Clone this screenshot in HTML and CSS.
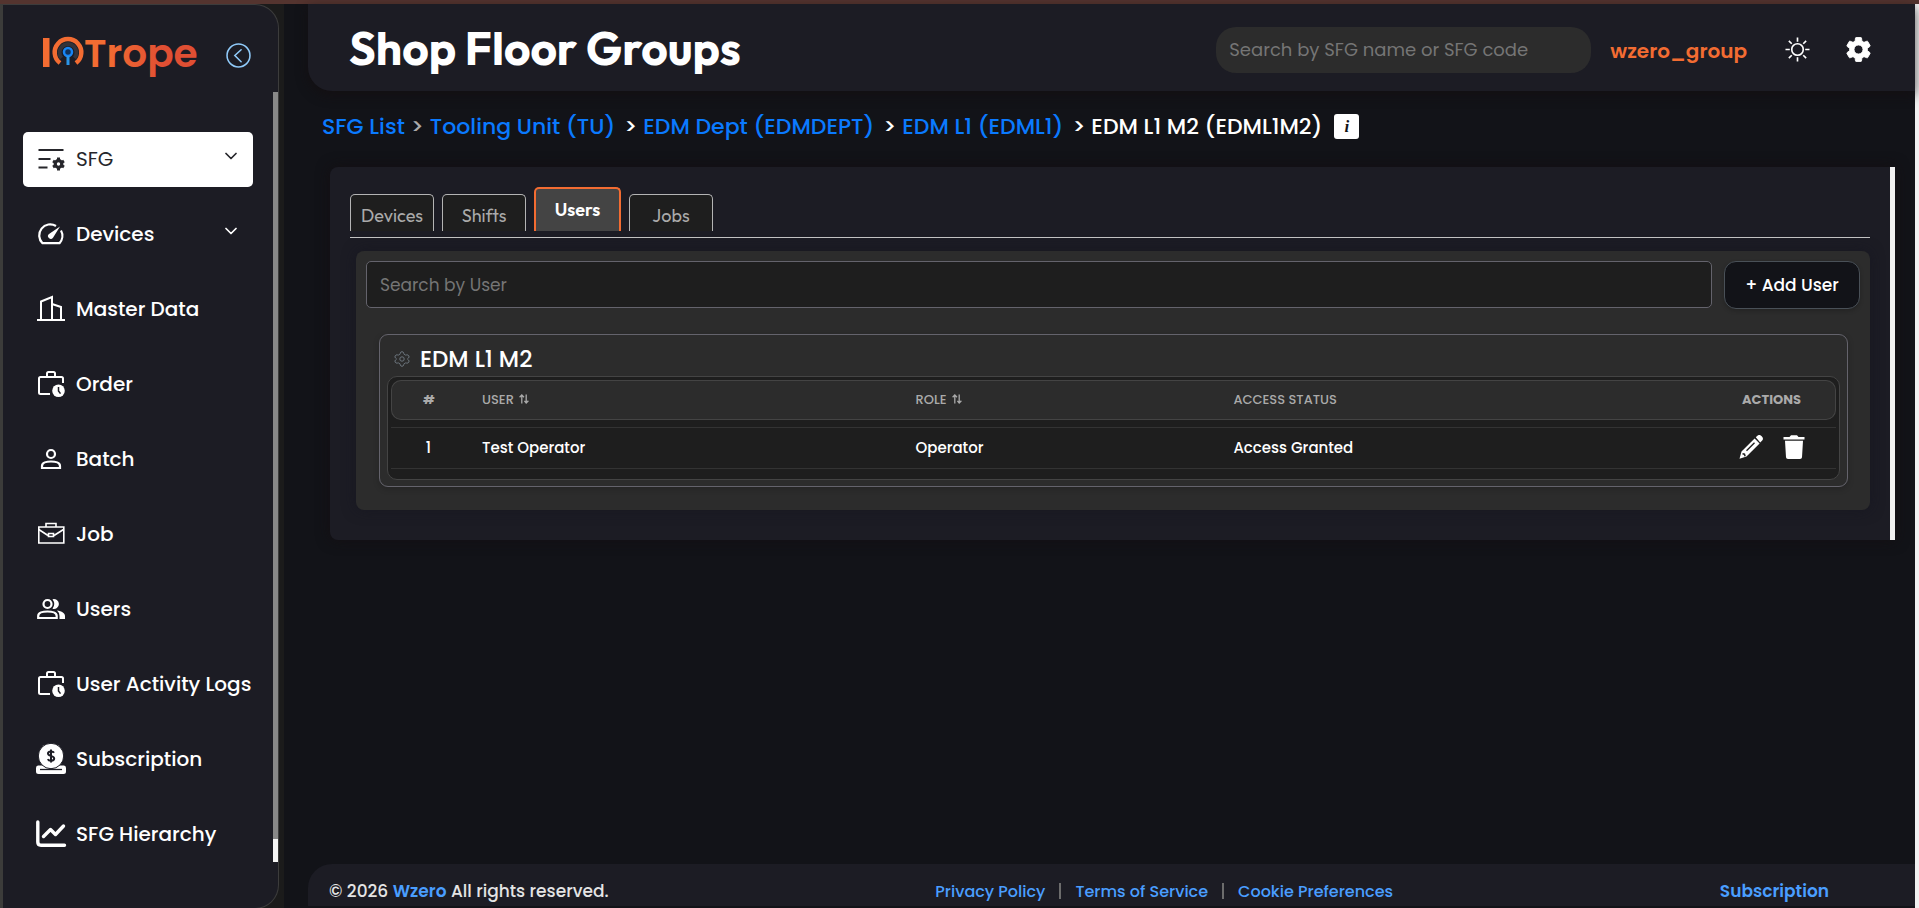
FILE: index.html
```html
<!DOCTYPE html>
<html lang="en">
<head>
<meta charset="utf-8">
<title>IOTrope – Shop Floor Groups</title>
<link rel="stylesheet" href="styles.css">
</head>
<body>
<svg class="sprite" aria-hidden="true">
  <symbol id="i-chevron" viewBox="0 0 12 12"><path d="M1 3.500l5 5 5-5" fill="none" stroke="currentColor" stroke-width="1.700" stroke-linecap="round" stroke-linejoin="round"/></symbol>
  <symbol id="i-case" viewBox="0 0 28 28"><g fill="none" stroke="currentColor" stroke-width="2" stroke-linejoin="round"><path d="M12 24H2.500Q1 24 1 22.500V8.500Q1 7 2.500 7h21Q25 7 25 8.500V13"/><path d="M9 7V3.500Q9 2 10.500 2h5Q17 2 17 3.500V7"/></g><circle cx="20.500" cy="20.800" r="6.300" fill="currentColor"/><path d="M20.500 17v4l2 2.600" fill="none" stroke="#1c1c24" stroke-width="1.500"/></symbol>
  <symbol id="i-sort" viewBox="0 0 10 10"><path d="M2.800 9.500V1M.6 3.200L2.800 1 5 3.200M7.200.5V9M5.400 6.800L7.200 9 9.400 6.800" fill="none" stroke="currentColor" stroke-width="1.300"/></symbol>
</svg>
<div class="frame">
  <aside class="sidebar">
    <div class="brand">
      <svg class="logo" viewBox="0 0 156 44" role="img" aria-label="IOTrope">
        <defs><linearGradient id="flame" x1="0" y1="0" x2="1" y2="0"><stop offset="0.200" stop-color="#f36c32"/><stop offset="0.700" stop-color="#e04f33"/></linearGradient></defs>
        <path d="M0 5h6.500v29H0z" fill="#f36c32"/>
        <path d="M17 30a13.300 13.300 0 1 1 16 0" fill="none" stroke="#f36c32" stroke-width="4.500"/>
        <path d="M18.500 25a8.500 8.500 0 1 1 13 0" fill="none" stroke="#33333a" stroke-width="4"/>
        <circle cx="25" cy="19" r="4" fill="#10325c" stroke="#1785f5" stroke-width="2.500"/>
        <path d="M25 23v9" stroke="#2a95e8" stroke-width="3"/>
        <text class="logo-text" x="41" y="34" fill="url(#flame)">Trope</text>
      </svg>
      <button class="icon-btn collapse" type="button" aria-label="Collapse menu">
        <svg viewBox="0 0 24 24"><g fill="none" stroke="currentColor" stroke-width="1.500"><circle cx="12" cy="12" r="11"/><path d="M14.500 6.500L8.500 12l6 6" stroke-linecap="round"/></g></svg>
      </button>
    </div>
    <div class="side-body">
      <nav class="menu">
        <a class="item active" href="#"><svg class="ico" viewBox="0 0 28 28"><path d="M.5 5h25M.5 14h12M.5 22.500h9" fill="none" stroke="currentColor" stroke-width="2.200"/><circle cx="20.500" cy="19" r="3.300" fill="none" stroke="currentColor" stroke-width="3.200"/><path d="M20.500 12.500v3M20.500 22.500v3M15 16l2.500 1.500M23.500 20.500L26 22M15 22l2.500-1.500M23.500 17.500L26 16" stroke="currentColor" stroke-width="3"/></svg><span>SFG</span><svg class="chev"><use href="#i-chevron"/></svg></a>
        <a class="item" href="#"><svg class="ico" viewBox="0 0 28 28"><g fill="none" stroke="currentColor" stroke-width="2.200"><path d="M18 6A11 11 0 0 0 4.500 23.200h17A11 11 0 0 0 23 10.500"/></g><path d="M22 6.500l-7 11.300a2.800 2.800 0 1 1-4-3.900z" fill="currentColor"/></svg><span>Devices</span><svg class="chev"><use href="#i-chevron"/></svg></a>
        <a class="item" href="#"><svg class="ico" viewBox="0 0 28 28"><path d="M-1 25h28M3 24.500V6.500L14 2v22.500M14 9l9 3v12.500" fill="none" stroke="currentColor" stroke-width="2"/></svg><span>Master Data</span></a>
        <a class="item" href="#"><svg class="ico"><use href="#i-case"/></svg><span>Order</span></a>
        <a class="item" href="#"><svg class="ico" viewBox="0 0 28 28"><circle cx="13" cy="9" r="4" fill="none" stroke="currentColor" stroke-width="2.200"/><path d="M4 23v-2c0-6 18-6 18 0v2z" fill="none" stroke="currentColor" stroke-width="2.200"/></svg><span>Batch</span></a>
        <a class="item" href="#"><svg class="ico" viewBox="0 0 28 28"><g fill="none" stroke="currentColor" stroke-width="1.600"><path d="M.8 7h25v16H.8zM8 7V3.500h10V7"/><path d="M.8 9.500L10 15.500M25.500 9.500L16 15.500"/><path d="M10.500 13.500h5v3h-5z"/></g></svg><span>Job</span></a>
        <a class="item" href="#"><svg class="ico" viewBox="0 0 28 28"><circle cx="9.500" cy="9" r="4" fill="none" stroke="currentColor" stroke-width="2.200"/><path d="M.2 23v-2c0-6 18.500-6 18.500 0v2z" fill="none" stroke="currentColor" stroke-width="2.200"/><path d="M14.500 4.200a5 5 0 1 1 0 9.600q3.500-4.800 0-9.600zM19 15.500c5 .7 8 2.500 8 5.500v3h-5.500v-3q0-3.500-2.500-5.500z" fill="currentColor"/></svg><span>Users</span></a>
        <a class="item" href="#"><svg class="ico"><use href="#i-case"/></svg><span>User Activity Logs</span></a>
        <a class="item" href="#"><svg class="ico wide" viewBox="0 0 30 30"><path d="M2 21.500h5q8 6.500 16 0h5q2 0 2 2.500v3.500q0 2.500-2.500 2.500h-25Q0 30 0 27.500V24q0-2.500 2-2.500z" fill="currentColor"/><path d="M4 25.500h22" stroke="#1c1c24" stroke-width="1.300"/><circle cx="15" cy="12" r="12.700" fill="currentColor" stroke="#1c1c24" stroke-width="1"/><path d="M18 8.700c-1-1.800-6-1.800-6 .8 0 3 6.200 1.800 6.200 5 0 2.800-5.400 2.800-6.400.6M15 5.500v13" fill="none" stroke="#1c1c24" stroke-width="2"/></svg><span>Subscription</span></a>
        <a class="item" href="#"><svg class="ico wide" viewBox="0 0 30 30"><path d="M1.800 3v20q0 3.200 3.200 3.200h23.500M7.500 17.500l7-7 5 5 8-8.500" fill="none" stroke="currentColor" stroke-width="3.400" stroke-linecap="round" stroke-linejoin="round"/></svg><span>SFG Hierarchy</span></a>
      </nav>
      <div class="track"><div class="thumb"></div></div>
    </div>
  </aside>

  <div class="page">
    <header class="topbar">
      <h1>Shop Floor Groups</h1>
      <input class="top-search" type="search" aria-label="Search SFG" placeholder="Search by SFG name or SFG code">
      <span class="account">wzero_group</span>
      <button class="icon-btn" type="button" aria-label="Toggle theme">
        <svg viewBox="0 0 26 26"><g fill="none" stroke="currentColor" stroke-width="1.700"><circle cx="13" cy="13" r="6"/><path d="M13 .5v4.500M13 21v4.500M.5 13H5M21 13h4.500M4 4l3 3M19 19l3 3M4 22l3-3M19 7l3-3"/></g></svg>
      </button>
      <button class="icon-btn" type="button" aria-label="Settings">
        <svg viewBox="2 2 20 20"><path fill="currentColor" stroke="currentColor" stroke-width=".7" d="M19.140 12.940c.04-.3.06-.61.06-.94 0-.32-.02-.64-.07-.94l2.030-1.580c.18-.14.23-.41.12-.61l-1.920-3.320c-.12-.22-.37-.29-.59-.22l-2.390.96c-.5-.38-1.030-.7-1.620-.94l-.36-2.540c-.04-.24-.24-.41-.48-.41h-3.840c-.24 0-.43.17-.47.41l-.36 2.540c-.59.24-1.130.57-1.620.94l-2.390-.96c-.22-.08-.47 0-.59.22L2.740 8.870c-.12.21-.08.47.12.61l2.030 1.580c-.05.3-.09.63-.09.94s.02.64.07.94l-2.030 1.580c-.18.14-.23.41-.12.61l1.920 3.320c.12.22.37.29.59.22l2.390-.96c.5.38 1.030.7 1.620.94l.36 2.540c.05.24.24.41.48.41h3.840c.24 0 .44-.17.47-.41l.36-2.540c.59-.24 1.130-.56 1.620-.94l2.390.96c.22.08.47 0 .59-.22l1.920-3.320c.12-.22.07-.47-.12-.61l-2.010-1.580zM12 15.600c-1.980 0-3.600-1.620-3.600-3.600s1.620-3.600 3.600-3.600 3.600 1.620 3.600 3.600-1.620 3.600-3.600 3.600z"/></svg>
      </button>
    </header>

    <nav class="crumbs" aria-label="Breadcrumb">
      <a href="#">SFG List</a>
      <span class="sep dim">&gt;</span>
      <a href="#">Tooling Unit (TU)</a>
      <span class="sep">&gt;</span>
      <a href="#">EDM Dept (EDMDEPT)</a>
      <span class="sep">&gt;</span>
      <a href="#">EDM L1 (EDML1)</a>
      <span class="sep">&gt;</span>
      <span>EDM L1 M2 (EDML1M2)</span>
      <button class="info" type="button" aria-label="Information">i</button>
    </nav>

    <main class="panel">
      <div class="tabs" role="tablist">
        <button class="tab" role="tab" type="button">Devices</button>
        <button class="tab" role="tab" type="button">Shifts</button>
        <button class="tab selected" role="tab" type="button" aria-selected="true">Users</button>
        <button class="tab" role="tab" type="button">Jobs</button>
      </div>
      <section class="card">
        <div class="tools">
          <input class="user-search" type="search" aria-label="Search by User" placeholder="Search by User">
          <button class="add" type="button">+ Add User</button>
        </div>
        <div class="group">
          <h2><svg viewBox="0 0 16 16"><g fill="none" stroke="currentColor" stroke-width="1"><circle cx="8" cy="8" r="2.200"/><path d="M6.300 2.200Q6.500.7 8 .7t1.700 1.500l.4 1.100 1.500.8 1.200-.2q1.400-.3 2 .9.700 1.300-.3 2.200l-.9.700v.6l.9.700q1 .9.300 2.200-.6 1.200-2 .9l-1.200-.2-1.500.8-.4 1.100Q9.500 15.300 8 15.300t-1.700-1.500l-.4-1.100-1.500-.8-1.200.2q-1.400.3-2-.9-.7-1.300.3-2.200l.9-.7v-.6l-.9-.7Q.5 6.100 1.200 4.800q.6-1.200 2-.9l1.200.2 1.500-.8z"/></g></svg>EDM L1 M2</h2>
          <div class="table-box">
            <table>
              <colgroup><col class="c-num"><col class="c-user"><col class="c-role"><col><col class="c-act"></colgroup>
              <thead>
                <tr><th class="mid bold" scope="col">#</th><th scope="col">USER <svg class="sort"><use href="#i-sort"/></svg></th><th scope="col">ROLE <svg class="sort"><use href="#i-sort"/></svg></th><th scope="col">ACCESS STATUS</th><th class="mid bold" scope="col">ACTIONS</th></tr>
              </thead>
              <tbody>
                <tr><td class="mid">1</td><td>Test Operator</td><td>Operator</td><td>Access Granted</td>
                  <td><div class="actions">
                    <button class="icon-btn" type="button" aria-label="Edit"><svg viewBox="0 0 24 24"><path fill="currentColor" d="M16.800 2.200l1-1a3.400 3.400 0 0 1 4.900 0 3.400 3.400 0 0 1 0 4.900l-1.500 1.500zM15.600 3.400l5 5L7.500 21.500.5 23.800 2.500 16.500z"/><path d="M7.500 15.800l8-8M3.500 18.800l2 .4.600 2" fill="none" stroke="#1e1e1e" stroke-width="1.400"/></svg></button>
                    <button class="icon-btn" type="button" aria-label="Delete"><svg viewBox="0 0 24 24"><path fill="currentColor" d="M1.500 2h6L9 .2h6L16.500 2h6v2.500h-21zM3 5.800h18l-1 16.400q-.1 1.800-2 1.800H6q-1.900 0-2-1.800z"/></svg></button>
                  </div></td></tr>
              </tbody>
            </table>
          </div>
        </div>
      </section>
    </main>

    <footer class="footer">
      <p>© 2026 <a href="#">Wzero</a> All rights reserved.</p>
      <nav class="legal"><a href="#">Privacy Policy</a><span class="bar"></span><a href="#">Terms of Service</a><span class="bar"></span><a href="#">Cookie Preferences</a></nav>
      <a class="sub" href="#">Subscription</a>
    </footer>
  </div>
</div>
</body>
</html>
```
FILE: styles.css
```css
* { box-sizing: border-box; }
body {
  margin: 0;
  background: #121318;
  color: #fff;
  font-family: Poppins, Inter, "Liberation Sans", sans-serif;
  font-size: 16px;
  font-weight: 500;
}
a { color: inherit; text-decoration: none; }
h1, h2, p { margin: 0; }
button, input { font: inherit; }
.sprite { position: absolute; width: 0; height: 0; }

.frame {
  display: flex;
  min-height: 100vh;
  border-top: 4px solid #54342f;
  background: linear-gradient(#3c3c3a, #3c3c3a) left / 3px 100% no-repeat,
              linear-gradient(#f1f1f1, #f1f1f1) right / 4px 100% no-repeat,
              #121318;
  padding: 0 4px 0 3px;
}

.icon-btn {
  padding: 0;
  border: 0;
  background: none;
  color: inherit;
  cursor: pointer;
}
.icon-btn svg { display: block; width: 25px; height: 25px; }

/* sidebar */
.sidebar {
  display: flex;
  flex-direction: column;
  flex: 0 0 281px;
  min-width: 0;
  padding-bottom: 47px;
  border-right: 5px solid #1b1b1b;
  background: #1b1b1b;
  position: relative;
  z-index: 0;
}
.sidebar::before {
  content: "";
  position: absolute;
  inset: 0;
  z-index: -1;
  border: 1px solid #3c3c3c;
  border-left: 0;
  border-radius: 0 24px 24px 0;
  background: #1c1c24;
}
.brand {
  display: flex;
  align-items: center;
  justify-content: space-between;
  height: 88px;
  padding: 14px 28px 0 40px;
}
.logo { width: 156px; height: 44px; overflow: visible; }
.logo-text { font: 600 39px/44px Poppins, Lato, sans-serif; }
.collapse { color: #90caf9; }
.side-body { display: flex; flex: 1; }
.menu {
  display: flex;
  flex-direction: column;
  gap: 20px;
  flex: 1;
  min-width: 0;
  padding: 40px 20px 0;
}
.item {
  display: flex;
  align-items: center;
  gap: 10px;
  height: 55px;
  padding: 0 0 2px 15px;
  border-radius: 5px;
  font-size: 20px;
  white-space: nowrap;
}
.item.active { background: #fff; color: #26262b; font-weight: 400; }
.ico { flex: none; width: 28px; height: 28px; overflow: visible; }
.ico.wide { width: 30px; height: 30px; margin: 0 0 0 -2px; }
.chev { width: 12px; height: 12px; margin: 0 16px 6px auto; }
.track { width: 5px; margin-right: 1px; background: #f5f5f5; }
.thumb { height: 97%; background: #888; }

/* page column */
.page {
  display: flex;
  flex-direction: column;
  flex: 1;
  min-width: 0;
  padding: 0 0 3px 24px;
}
.topbar {
  display: flex;
  align-items: center;
  height: 87px;
  padding: 4px 44px 0 41px;
  border-bottom-left-radius: 24px;
  background: #1c1c24;
  box-shadow: 0 4px 12px rgba(20, 14, 16, 0.700);
}
.topbar h1 {
  flex: 1;
  padding-bottom: 4px;
  font: 700 46px/60px Outfit, Lato, sans-serif;
}
.topbar .icon-btn + .icon-btn { margin-left: 36px; }
.top-search {
  width: 375px;
  height: 46px;
  padding: 0 13px;
  border: 0;
  border-radius: 20px;
  background: #2c2c2c;
  color: #fff;
  font-size: 18px;
  font-weight: 400;
}
.top-search::placeholder, .user-search::placeholder { color: #757575; opacity: 1; }
.account {
  margin: 0 38px 0 19px;
  padding-top: 3px;
  color: #f36c32;
  font-size: 20px;
  font-weight: 600;
}

.crumbs {
  display: flex;
  align-items: center;
  gap: 6px;
  height: 76px;
  padding: 0 0 6px 14px;
  font-size: 22px;
  white-space: nowrap;
}
.crumbs a { color: #0a7aff; }
.crumbs .sep { margin-left: 3px; }
.crumbs .dim { margin-left: 0; color: #aaa; }
.info {
  width: 25px;
  height: 25px;
  margin-left: 6px;
  padding: 0;
  border: 0;
  border-radius: 3px;
  background: #fff;
  color: #121318;
  font: italic 700 17px/25px "Liberation Serif", serif;
}

.panel {
  margin: 0 20px 0 22px;
  padding: 20px 20px 30px;
  border-right: 5px solid #f1f1f1;
  border-radius: 8px 0 0 8px;
  background: #1c1c24;
  box-shadow: 0 0 14px rgba(20, 14, 16, 0.800);
}
.tabs {
  display: flex;
  align-items: flex-end;
  gap: 8px;
  padding-bottom: 6px;
  border-bottom: 1px solid #c4c4c4;
}
.tab {
  width: 84px;
  height: 37px;
  padding: 5px 0 0;
  border: 1px solid #b4b4b4;
  border-bottom: 0;
  border-radius: 5px 5px 0 0;
  background: #1e1e1e;
  color: #aaa;
  font: 400 18px/22px Outfit, Lato, sans-serif;
}
.tab.selected {
  width: 87px;
  height: 44px;
  padding: 0 0 1px;
  border: 2px solid #f36c32;
  border-bottom: 0;
  background: #444;
  color: #fff;
  font-weight: 600;
}
.card {
  margin: 13px 0 0 6px;
  padding: 10px 10px 23px;
  border-radius: 8px;
  background: #2c2c2c;
  box-shadow: 0 0 14px rgba(20, 20, 32, 0.600);
}
.tools { display: flex; align-items: flex-start; gap: 12px; }
.user-search {
  flex: 1;
  height: 47px;
  padding: 0 13px;
  border: 1px solid #64636c;
  border-radius: 5px;
  background: #1e1e1e;
  color: #fff;
  font-size: 17px;
  font-weight: 400;
}
.add {
  width: 136px;
  height: 48px;
  padding: 0;
  border: 1px solid #495057;
  border-radius: 12px;
  background: #121318;
  color: #fff;
  font-size: 17px;
  box-shadow: 0 2px 4px rgba(0, 0, 0, 0.200);
}
.group {
  margin: 25px 12px 0 13px;
  padding: 6px 7px;
  border: 1px solid #64636c;
  border-radius: 9px;
  box-shadow: 0 2px 6px rgba(0, 0, 0, 0.200);
}
.group h2 {
  display: flex;
  align-items: center;
  gap: 10px;
  height: 35px;
  padding-left: 7px;
  font-size: 23px;
  font-weight: 500;
}
.group h2 svg { width: 16px; height: 16px; color: #6c757d; }
.table-box {
  padding: 3px 3px 10px;
  border: 1px solid #444;
  border-radius: 10px;
  background: #1e1e1e;
}
table {
  width: 100%;
  border-collapse: separate;
  border-spacing: 0;
  table-layout: fixed;
  font-size: 15px;
}
.c-num { width: 75px; }
.c-user { width: 30%; }
.c-role { width: 22%; }
.c-act { width: 128px; }
th, td { padding: 0 16px; text-align: left; }
th {
  height: 40px;
  border: 1px solid #444;
  border-width: 1px 0;
  background: #2c2c2c;
  color: #aaa;
  font-size: 13px;
  font-weight: 500;
}
th:first-child { border-left-width: 1px; border-radius: 10px 0 0 10px; }
th:last-child { border-right-width: 1px; border-radius: 0 10px 10px 0; }
.mid { text-align: center; }
.bold { font-weight: 700; }
.sort { width: 10px; height: 10px; margin-left: 2px; }
tbody::before { content: ""; display: block; height: 7px; }
td {
  height: 42px;
  padding-bottom: 2px;
  border: 1px solid #333;
  border-width: 1px 0;
}
.actions { display: flex; justify-content: center; gap: 19px; }
.actions svg { width: 24px; height: 24px; }

.footer {
  display: flex;
  align-items: center;
  justify-content: space-between;
  height: 42px;
  margin-top: auto;
  padding: 12px 86px 0 21px;
  border-top-left-radius: 24px;
  background: #1c1c24;
}
.footer p { color: #e4e4e4; font-size: 17px; }
.footer a { color: #4a9eff; }
.footer p a, .footer .sub { font-weight: 600; }
.legal { display: flex; align-items: center; gap: 14px; font-size: 16px; }
.bar { width: 2px; height: 16px; background: #6c6c6c; }
.sub { font-size: 17px; }
```
